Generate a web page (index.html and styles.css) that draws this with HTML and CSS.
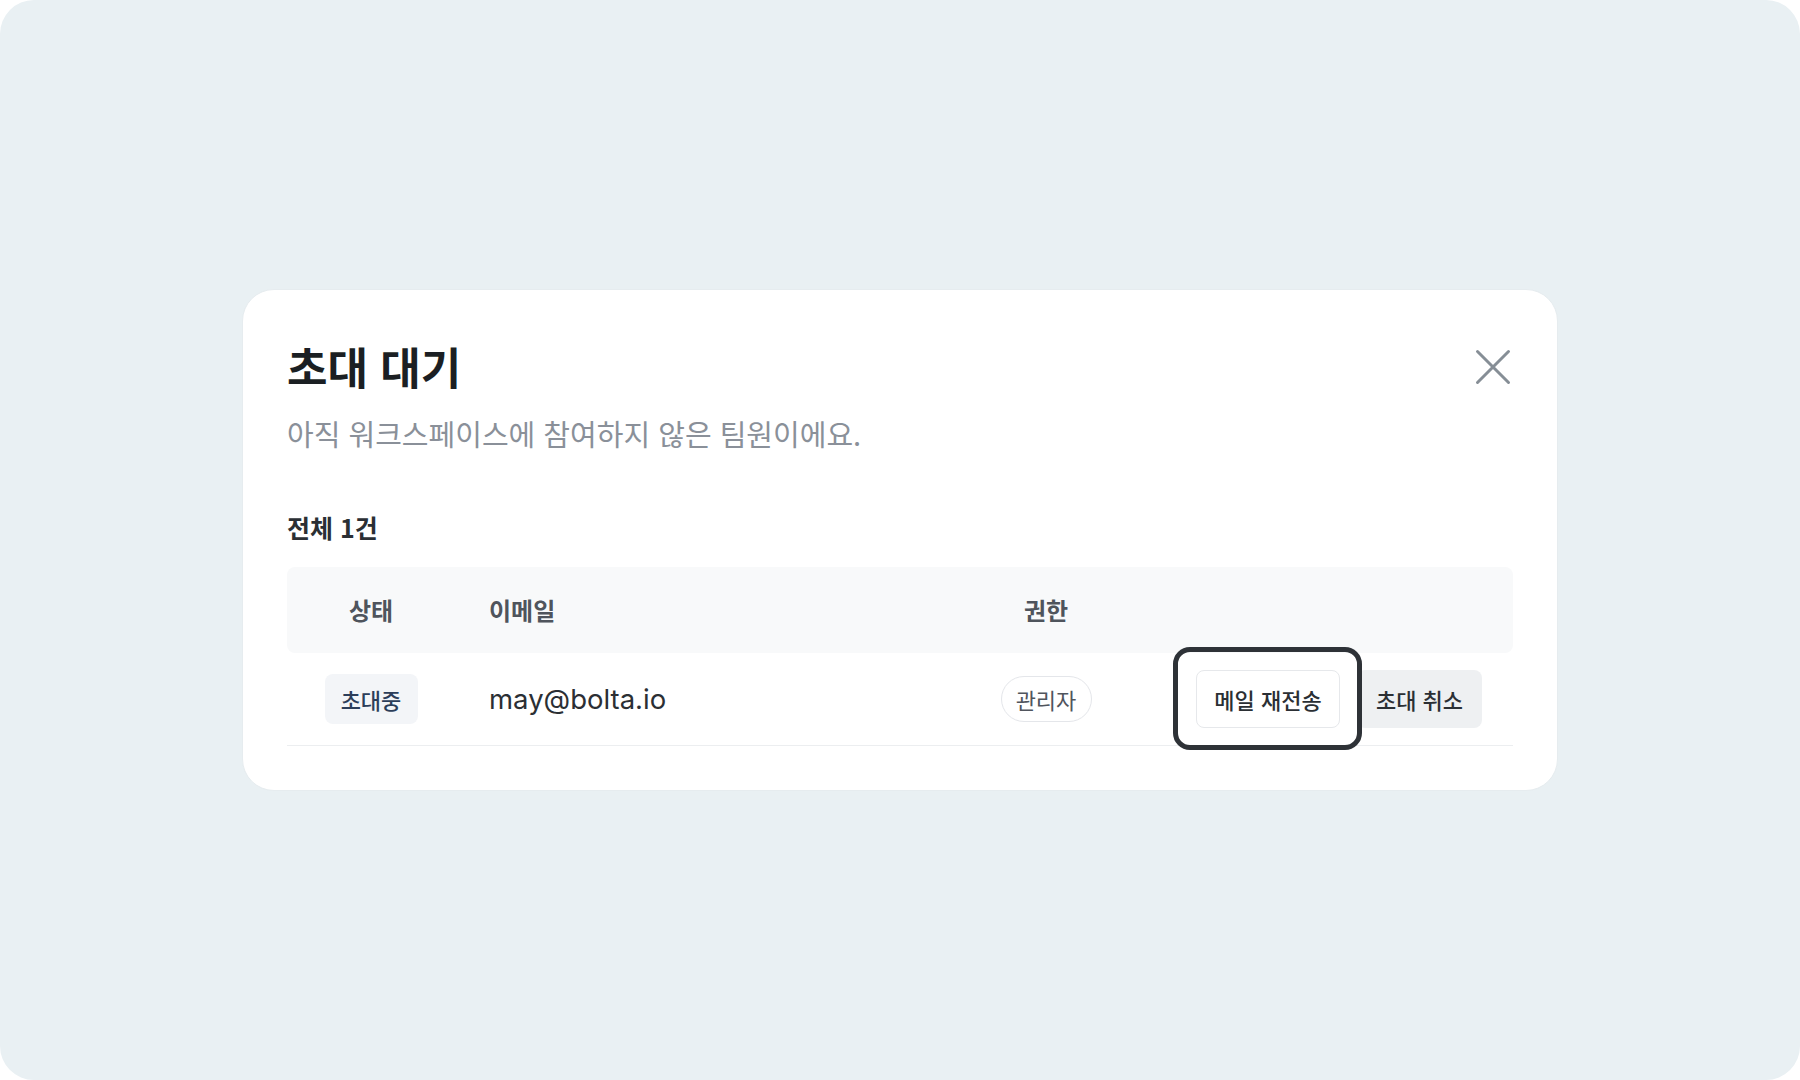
FILE: index.html
```html
<!DOCTYPE html>
<html lang="ko">
<head>
<meta charset="utf-8">
<title>초대 대기</title>
<link rel="stylesheet" href="styles.css">
</head>
<body>
<div class="frame">
  <section class="card">
    <header class="card-head">
      <div class="head-text">
        <h1 class="title">초대 대기</h1>
        <p class="subtitle">아직 워크스페이스에 참여하지 않은 팀원이에요.</p>
      </div>
      <button class="close" aria-label="닫기">
        <svg width="36" height="36" viewBox="0 0 36 36" fill="none">
          <path d="M2.5 2.5 L33.5 33.5 M33.5 2.5 L2.5 33.5" stroke="#868e96" stroke-width="3" stroke-linecap="round"/>
        </svg>
      </button>
    </header>
    <div class="count">전체 1건</div>
    <div class="table">
      <div class="row head">
        <div class="cell c-status">상태</div>
        <div class="cell c-email">이메일</div>
        <div class="cell c-role">권한</div>
        <div class="cell c-actions"></div>
      </div>
      <div class="row body">
        <div class="cell c-status"><span class="badge">초대중</span></div>
        <div class="cell c-email email">may@bolta.io</div>
        <div class="cell c-role"><span class="pill">관리자</span></div>
        <div class="cell c-actions">
          <button class="btn btn-outline focus">메일 재전송</button>
          <button class="btn btn-gray">초대 취소</button>
        </div>
      </div>
    </div>
  </section>
</div>
</body>
</html>
```
FILE: styles.css
```css
* { box-sizing: border-box; }
html, body {
  margin: 0;
  padding: 0;
  background: #ffffff;
}
body {
  font-family: "Noto Sans CJK KR", "Noto Sans", sans-serif;
  color: #1d2125;
}
.frame {
  width: 1800px;
  height: 1080px;
  background: #e9f0f3;
  border-radius: 34px;
  display: flex;
  align-items: center;
  justify-content: center;
}
.card {
  width: 1316px;
  background: #ffffff;
  border-radius: 32px;
  border: 1px solid #e6ecef;
  padding: 50px 44px 44px;
  margin-bottom: 1px;
}
.card-head {
  display: flex;
  justify-content: space-between;
  align-items: flex-start;
}
.title {
  margin: 0;
  font-size: 44px;
  line-height: 52px;
  font-weight: 700;
  color: #1b1f23;
}
.subtitle {
  margin: 22px 0 0;
  font-size: 29px;
  line-height: 38px;
  font-weight: 400;
  color: #8a9099;
}
.close {
  border: 0;
  background: none;
  padding: 0;
  margin: 9px 2px 0 0;
  width: 36px;
  height: 36px;
  cursor: pointer;
  display: block;
}
.close svg { display: block; }
.count {
  margin-top: 59px;
  font-size: 25px;
  line-height: 32px;
  font-weight: 700;
  color: #2b2f34;
}
.table {
  margin-top: 24px;
}
.row {
  display: grid;
  grid-template-columns: 202px 477px 160px 1fr;
  align-items: center;
  padding-right: 31px;
}
.row.head {
  height: 86px;
  background: #f8f9fa;
  border-radius: 8px;
  font-size: 24px;
  font-weight: 600;
  color: #4f545c;
}
.row.body {
  height: 93px;
  border-bottom: 1px solid #eceef0;
}
.c-status {
  padding-right: 34px;
  text-align: center;
  display: flex;
  justify-content: center;
}
.c-role {
  display: flex;
  justify-content: center;
}
.c-actions {
  display: flex;
  justify-content: flex-end;
  gap: 17px;
}
.badge {
  display: inline-flex;
  align-items: center;
  justify-content: center;
  width: 93px;
  height: 50px;
  border-radius: 8px;
  background: #f3f5f8;
  color: #2c3e5a;
  font-size: 22px;
  font-weight: 500;
}
.email {
  font-family: "Inter", "Noto Sans CJK KR", sans-serif;
  font-size: 27.5px;
  color: #2b2f34;
}
.pill {
  display: inline-flex;
  align-items: center;
  justify-content: center;
  width: 91px;
  height: 46px;
  border-radius: 23px;
  border: 1.5px solid #e4e6ea;
  color: #50555d;
  font-size: 22px;
  font-weight: 400;
}
.btn {
  font-family: inherit;
  height: 58px;
  padding: 0;
  border-radius: 8px;
  font-size: 22px;
  font-weight: 500;
  color: #2b2f34;
  cursor: pointer;
}
.btn-outline {
  width: 144px;
  background: #ffffff;
  border: 1.5px solid #e6e8eb;
}
.btn-gray {
  width: 125px;
  background: #eef0f2;
  border: 0;
}
.focus {
  position: relative;
}
.focus::after {
  content: "";
  position: absolute;
  top: -24px;
  bottom: -23px;
  left: -24px;
  right: -23px;
  border: 5px solid #2e3237;
  border-radius: 17px;
  pointer-events: none;
}
```
